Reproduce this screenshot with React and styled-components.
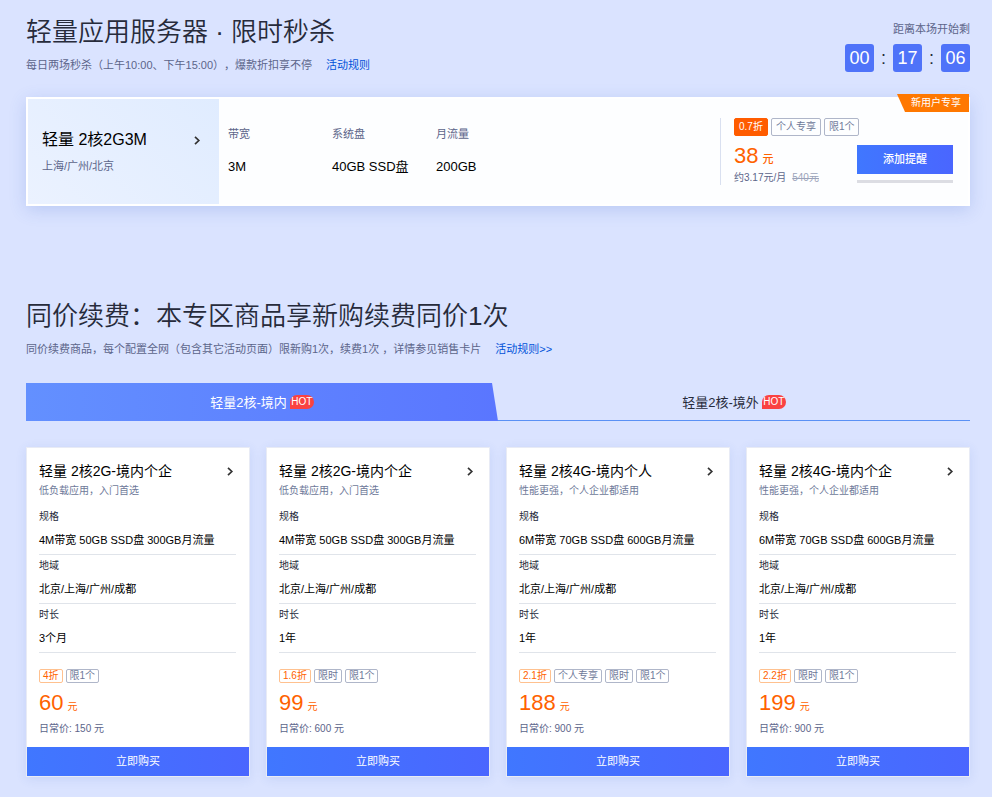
import React from 'react'
import styled, {createGlobalStyle} from "styled-components";

const GlobalStyle = createGlobalStyle`
  * {
    box-sizing: border-box;
  }

  body {
    margin: 0;
    background-color: #dae3ff;
    color: #000000;
    font-family: "Liberation Sans", "Noto Sans CJK SC", sans-serif;
    font-size: 11px;
    line-height: 16px;
    text-spacing-trim: space-all;
  }

  h2, h3, p, dl, dd {
    margin: 0;
    font-weight: 400;
  }

  a {
    text-decoration: none;
    color: inherit;
  }

  button {
    border: 0;
    font-family: inherit;
    cursor: pointer;
  }
`
const Page = styled.main`
  padding: 13px 22px 20px 26px;
`
const SectionHead = styled.header`
  display: flex;
  align-items: flex-start;
  justify-content: space-between;

  .head__title {
    font-size: 26px;
    line-height: 38px;
    font-weight: 350;
    color: #272b3b;
  }

  .head__desc {
    margin-top: 6px;
    color: #5c658a;
  }

  .head__link {
    margin-left: 14px;
    color: #0052d9;
  }
`
const Countdown = styled.div`
  padding-top: 8px;
  text-align: right;
  color: #5c658a;

  .countdown__time {
    display: flex;
    align-items: center;
    margin-top: 7px;
  }

  .countdown__colon {
    width: 19px;
    text-align: center;
    font-size: 18px;
    color: #272b3b;
  }

  .countdown__num {
    width: 29px;
    height: 28px;
    line-height: 28px;
    border-radius: 3px;
    text-align: center;
    font-size: 18px;
    color: #ffffff;
    background-color: #4f73f9;
  }
`
const FlashCard = styled.article`
  position: relative;
  display: flex;
  margin-top: 24px;
  border: 2px solid #ffffff;
  background-color: #fdfeff;
  box-shadow: 0 4px 16px rgba(60, 100, 200, .2);
`
const FlashName = styled.a`
  display: flex;
  align-items: flex-start;
  justify-content: space-between;
  width: 191px;
  height: 105px;
  padding: 29px 18px 0 14px;
  background-image: linear-gradient(45deg, #ebf2ff, #e0ecff);

  h3 {
    font-size: 16px;
    line-height: 24px;
  }

  p {
    margin-top: 6px;
    color: #5c658a;
  }

  svg {
    margin-top: 8px;
  }
`
const FlashSpecs = styled.dl`
  display: flex;
  flex: 1;
  padding: 27px 0 0 9px;

  div {
    width: 104px;
  }

  dt {
    color: #5c658a;
  }

  dd {
    margin-top: 15px;
    font-size: 13px;
    line-height: 20px;
  }
`
const FlashOffer = styled.div`
  align-self: flex-start;
  display: flex;
  width: 233px;
  height: 67px;
  margin: 19px 15px 0 0;
  padding-left: 13px;
  border-left: 1px solid #d9e0f0;
  white-space: nowrap;

  .offer__info {
    width: 123px;
  }

  .offer__action {
    flex: 1;
    padding-top: 27px;
  }

  .offer__progress {
    height: 3px;
    margin-top: 6px;
    background-color: #dcdde3;
  }
`
const Ribbon = styled.span`
  position: absolute;
  top: -5px;
  right: -1px;
  width: 72px;
  height: 18px;
  padding-right: 8px;
  line-height: 18px;
  font-size: 10px;
  text-align: right;
  color: #ffffff;
  background-color: #ff7800;
  clip-path: polygon(0 0, 100% 0, 100% 100%, 8px 100%);
`
const Tags = styled.div`
  display: flex;
  gap: 3px;
`
const tagColors = {
  solid: {text: '#ffffff', line: '#ff5c00', back: '#ff5c00'},
  orange: {text: '#ff6200', line: '#ffc18f', back: 'transparent'},
  grey: {text: '#6e7999', line: '#afb6c9', back: 'transparent'},
}
const Tag = styled.span`
  height: ${({$large}) => $large ? 18 : 14}px;
  padding: 0 ${({$large}) => $large ? 4 : 3}px;
  line-height: ${({$large}) => $large ? 16 : 12}px;
  border: 1px solid ${({$kind}) => tagColors[$kind].line};
  border-radius: 2px;
  font-size: 10px;
  color: ${({$kind}) => tagColors[$kind].text};
  background-color: ${({$kind}) => tagColors[$kind].back};
`
const Price = styled.p`
  margin-top: 8px;
  font-size: 22px;
  line-height: 24px;
  color: #ff6200;

  small {
    margin-left: 4px;
    font-size: ${({$strong}) => $strong ? 11 : 10}px;
    line-height: 12px;
    font-weight: ${({$strong}) => $strong ? 500 : 400};
  }
`
const PriceNote = styled.p`
  margin-top: ${({$tight}) => $tight ? 2 : 6}px;
  font-size: 10px;
  color: #5c658a;

  del {
    margin-left: 6px;
    color: #9ba3ba;
  }
`
const BuyButton = styled.button`
  display: block;
  width: 100%;
  height: 29px;
  padding: 0 0 3px;
  font-size: 11px;
  font-weight: ${({$strong}) => $strong ? 500 : 400};
  color: #ffffff;
  background-image: linear-gradient(90deg, #4077ff, #4a66ff);
`
const RenewSection = styled.section`
  margin-top: 91px;
`
const Tabs = styled.div`
  display: flex;
  margin-top: 26px;
  box-shadow: inset 0 -1px #5a91f5;
`
const Tab = styled.button`
  display: flex;
  flex: 1;
  align-items: center;
  justify-content: center;
  gap: 3px;
  height: 38px;
  padding: 0 0 1px;
  font-size: 13px;
  color: ${({$active}) => $active ? '#ffffff' : '#272b3b'};
  background: ${({$active}) => $active ? 'linear-gradient(90deg, #6390ff, #5a76ff)' : 'none'};
  clip-path: ${({$active}) => $active ? 'polygon(0 0, calc(100% - 6px) 0, 100% 100%, 0 100%)' : 'none'};

  .tab__hot {
    width: 24px;
    height: 14px;
    line-height: 14px;
    border-radius: 7px 7px 7px 0;
    font-size: 10px;
    text-align: center;
    color: #ffffff;
    background-color: #fa4242;
  }
`
const CardGrid = styled.div`
  display: grid;
  grid-template-columns: repeat(4, 1fr);
  gap: 16px;
  margin-top: 26px;
`
const Card = styled.article`
  border: 1px solid #e8ebf5;
  background-color: #ffffff;
  box-shadow: 0 2px 10px rgba(60, 100, 200, .12);

  .card__body {
    padding: 12px 13px 10px 12px;
  }

  .card__head {
    display: flex;
    justify-content: space-between;
    padding-right: 2px;
  }

  .card__title {
    font-size: 14px;
    line-height: 22px;
  }

  .card__desc {
    margin-top: 1px;
    font-size: 10px;
    color: #6e7999;
  }

  svg {
    margin-top: 7px;
  }
`
const CardSpecs = styled.dl`
  margin: 7px 0 16px;

  div {
    padding: 3px 0 4px;
    border-bottom: 1px solid #e0e4ea;
  }

  dt {
    font-size: 10px;
    color: #272b3b;
  }

  dd {
    margin-top: 5px;
    line-height: 20px;
    white-space: nowrap;
  }
`

const flashSpecs = [
  ['带宽', '3M'],
  ['系统盘', '40GB SSD盘'],
  ['月流量', '200GB'],
]

const products = [
  {
    title: '轻量 2核2G-境内个企', desc: '低负载应用，入门首选', spec: '4M带宽 50GB SSD盘 300GB月流量',
    time: '3个月', tags: ['4折', '限1个'], price: 60, origin: 150,
  },
  {
    title: '轻量 2核2G-境内个企', desc: '低负载应用，入门首选', spec: '4M带宽 50GB SSD盘 300GB月流量',
    time: '1年', tags: ['1.6折', '限时', '限1个'], price: 99, origin: 600,
  },
  {
    title: '轻量 2核4G-境内个人', desc: '性能更强，个人企业都适用', spec: '6M带宽 70GB SSD盘 600GB月流量',
    time: '1年', tags: ['2.1折', '个人专享', '限时', '限1个'], price: 188, origin: 900,
  },
  {
    title: '轻量 2核4G-境内个企', desc: '性能更强，个人企业都适用', spec: '6M带宽 70GB SSD盘 600GB月流量',
    time: '1年', tags: ['2.2折', '限时', '限1个'], price: 199, origin: 900,
  },
]

function Arrow() {
    return (
        <svg width="8" height="9" viewBox="0 0 8 9" fill="none" stroke="#333333" strokeWidth="1.7" aria-hidden="true">
            <path d="M2 0.8L5.8 4.5L2 8.2"/>
        </svg>
    )
}

function ProductCard({item}) {
    return (
        <Card>
            <div className="card__body">
                <a className="card__head" href="#buy">
                    <h3 className="card__title">{item.title}</h3>
                    <Arrow/>
                </a>
                <p className="card__desc">{item.desc}</p>
                <CardSpecs>
                    <div>
                        <dt>规格</dt>
                        <dd>{item.spec}</dd>
                    </div>
                    <div>
                        <dt>地域</dt>
                        <dd>北京/上海/广州/成都</dd>
                    </div>
                    <div>
                        <dt>时长</dt>
                        <dd>{item.time}</dd>
                    </div>
                </CardSpecs>
                <Tags>
                    {item.tags.map((tag, i) => (
                        <Tag key={tag} $kind={i === 0 ? 'orange' : 'grey'}>{tag}</Tag>
                    ))}
                </Tags>
                <Price>{item.price}<small>元</small></Price>
                <PriceNote>日常价: {item.origin} 元</PriceNote>
            </div>
            <BuyButton type="button">立即购买</BuyButton>
        </Card>
    )
}

export default function App() {
    const [tab, setTab] = React.useState(0)

    return (
        <Page lang="zh-CN">
            <GlobalStyle/>
            <section>
                <SectionHead>
                    <div>
                        <h2 className="head__title">轻量应用服务器 · 限时秒杀</h2>
                        <p className="head__desc">
                            每日两场秒杀（上午10:00、下午15:00），爆款折扣享不停
                            <a className="head__link" href="#flash-rules">活动规则</a>
                        </p>
                    </div>
                    <Countdown>
                        <p>距离本场开始剩</p>
                        <div className="countdown__time">
                            <span className="countdown__num">00</span>
                            <span className="countdown__colon">:</span>
                            <span className="countdown__num">17</span>
                            <span className="countdown__colon">:</span>
                            <span className="countdown__num">06</span>
                        </div>
                    </Countdown>
                </SectionHead>
                <FlashCard>
                    <FlashName href="#flash">
                        <div>
                            <h3>轻量 2核2G3M</h3>
                            <p>上海/广州/北京</p>
                        </div>
                        <Arrow/>
                    </FlashName>
                    <FlashSpecs>
                        {flashSpecs.map(([name, value]) => (
                            <div key={name}>
                                <dt>{name}</dt>
                                <dd>{value}</dd>
                            </div>
                        ))}
                    </FlashSpecs>
                    <FlashOffer>
                        <div className="offer__info">
                            <Tags>
                                <Tag $large $kind="solid">0.7折</Tag>
                                <Tag $large $kind="grey">个人专享</Tag>
                                <Tag $large $kind="grey">限1个</Tag>
                            </Tags>
                            <Price $strong>38<small>元</small></Price>
                            <PriceNote $tight>约3.17元/月<del>540元</del></PriceNote>
                        </div>
                        <div className="offer__action">
                            <BuyButton $strong type="button">添加提醒</BuyButton>
                            <div className="offer__progress"></div>
                        </div>
                    </FlashOffer>
                    <Ribbon>新用户专享</Ribbon>
                </FlashCard>
            </section>
            <RenewSection>
                <SectionHead>
                    <div>
                        <h2 className="head__title">同价续费：本专区商品享新购续费同价1次</h2>
                        <p className="head__desc">
                            同价续费商品，每个配置全网（包含其它活动页面）限新购1次，续费1次 ，详情参见销售卡片
                            <a className="head__link" href="#renew-rules">活动规则&gt;&gt;</a>
                        </p>
                    </div>
                </SectionHead>
                <Tabs role="tablist">
                    {['轻量2核-境内', '轻量2核-境外'].map((name, i) => (
                        <Tab key={name} type="button" role="tab" aria-selected={tab === i} $active={tab === i}
                             onClick={() => setTab(i)}>
                            {name}<span className="tab__hot">HOT</span>
                        </Tab>
                    ))}
                </Tabs>
                <CardGrid>
                    {products.map((item, i) => <ProductCard key={i} item={item}/>)}
                </CardGrid>
            </RenewSection>
        </Page>
    )
}
